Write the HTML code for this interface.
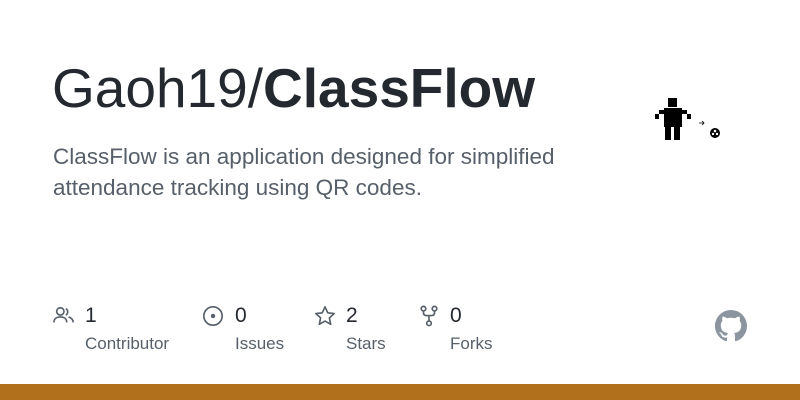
<!DOCTYPE html>
<html><head><style>
body{margin:0;width:800px;height:400px;background:#fff;position:relative;overflow:hidden;font-family:"Liberation Sans",sans-serif;color:#24292f}
.t{position:absolute;left:52px;top:56px;font-size:55px;letter-spacing:0px;white-space:nowrap}
.d{position:absolute;left:53px;top:141px;font-size:22.5px;line-height:31px;color:#57606a;width:600px}
.n{position:absolute;top:304px;font-size:21px}
.l{position:absolute;top:334px;font-size:17px;color:#57606a}
.ic{position:absolute;top:305px}
.bar{position:absolute;left:0;bottom:0;width:800px;height:16px;background:#b0701c}
</style></head><body>
<div class="t">Gaoh19/<b>ClassFlow</b></div>
<div class="d">ClassFlow is an application designed for simplified<br>attendance tracking using QR codes.</div>
<svg style="position:absolute;left:650px;top:95px" width="80" height="50">
<g fill="#000"><rect x="18" y="3" width="9" height="9"/><rect x="14" y="13" width="18" height="19"/><rect x="15" y="32" width="6" height="13"/><rect x="24" y="32" width="6" height="13"/><rect x="9" y="15" width="5" height="4"/><rect x="5" y="19" width="4" height="5"/><rect x="32" y="15" width="5" height="4"/><rect x="37" y="19" width="4" height="5"/>
<circle cx="65" cy="38" r="5"/></g>
<path d="M49 28h5M52 26l2 2-2 2" stroke="#000" fill="none" stroke-width="0.8"/>
<g fill="#fff"><circle cx="65" cy="36" r="1.3"/><circle cx="63" cy="39" r="1.2"/><circle cx="67" cy="39" r="1.2"/></g>
</svg>
<svg class="ic" style="left:53px" width="22" height="22" viewBox="0 0 24 24" fill="none" stroke="#57606a" stroke-width="1.8"><circle cx="8" cy="7" r="4"/><path d="M1 19c0-4 3-6 7-6s7 2 7 6M14 4a4 4 0 0 1 0 7M17 13c3 1 5 3 5 6"/></svg>
<div class="n" style="left:85px">1</div><div class="l" style="left:85px">Contributor</div>
<svg class="ic" style="left:202px" width="22" height="22" viewBox="0 0 24 24" fill="none" stroke="#57606a" stroke-width="1.8"><circle cx="12" cy="12" r="10"/><circle cx="12" cy="12" r="1.5" fill="#57606a"/></svg>
<div class="n" style="left:235px">0</div><div class="l" style="left:235px">Issues</div>
<svg class="ic" style="left:314px" width="22" height="22" viewBox="0 0 24 24" fill="none" stroke="#57606a" stroke-width="1.8" stroke-linejoin="round"><path d="M12 2l3 6.5 7 .8-5.2 4.8 1.4 7L12 17.5 5.8 21l1.4-7L2 9.3l7-.8z"/></svg>
<div class="n" style="left:346px">2</div><div class="l" style="left:346px">Stars</div>
<svg class="ic" style="left:418px" width="22" height="22" viewBox="0 0 24 24" fill="none" stroke="#57606a" stroke-width="1.8"><circle cx="6" cy="4" r="2.5"/><circle cx="18" cy="4" r="2.5"/><circle cx="12" cy="20" r="2.5"/><path d="M6 6.5v2c0 2 1 3 3 3h6c2 0 3-1 3-3v-2M12 11.5v6"/></svg>
<div class="n" style="left:450px">0</div><div class="l" style="left:450px">Forks</div>
<svg style="position:absolute;left:715px;top:310px" width="32" height="32" viewBox="0 0 16 16"><path fill="#8c959f" d="M8 0C3.58 0 0 3.58 0 8c0 3.540 2.29 6.53 5.47 7.59.4.07.55-.17.55-.38 0-.19-.01-.82-.01-1.49-2.01.37-2.530-.49-2.69-.94-.09-.23-.48-.94-.82-1.13-.28-.15-.68-.52-.01-.53.63-.01 1.080.58 1.23.82.72 1.21 1.87.87 2.33.66.07-.52.28-.87.51-1.07-1.78-.2-3.64-.89-3.64-3.95 0-.87.31-1.59.82-2.15-.08-.2-.36-1.02.08-2.12 0 0 .67-.21 2.2.82.64-.18 1.32-.27 2-.27.68 0 1.36.09 2 .27 1.53-1.04 2.2-.82 2.2-.82.44 1.1.16 1.92.08 2.12.51.56.82 1.27.82 2.15 0 3.07-1.87 3.75-3.65 3.95.29.25.54.73.54 1.48 0 1.07-.01 1.93-.01 2.2 0 .21.15.46.55.38A8.013 8.013 0 0016 8c0-4.42-3.58-8-8-8z"/></svg>
<div class="bar"></div>
</body></html>
